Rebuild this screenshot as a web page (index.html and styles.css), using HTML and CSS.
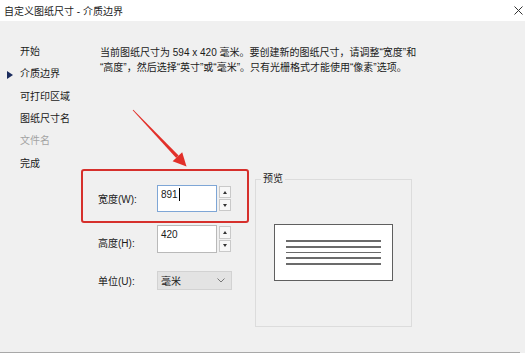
FILE: index.html
```html
<!DOCTYPE html>
<html lang="zh-CN">
<head>
    <meta charset="UTF-8">
    <title>自定义图纸尺寸 - 介质边界</title>
    <link rel="stylesheet" href="styles.css">
</head>
<body>
    <div class="dialog">
        <div class="titlebar">
            <span class="title">自定义图纸尺寸 - 介质边界</span>
            <svg class="close" width="9" height="9" viewBox="0 0 9 9">
                <path d="M0.5 0.5 L8.5 8.5 M8.5 0.5 L0.5 8.5" stroke="#333" stroke-width="1" fill="none"/>
            </svg>
        </div>

        <div class="content">
            <ul class="steps">
                <li class="step">开始</li>
                <li class="step current">介质边界</li>
                <li class="step">可打印区域</li>
                <li class="step">图纸尺寸名</li>
                <li class="step disabled">文件名</li>
                <li class="step">完成</li>
            </ul>

            <div class="main">
                <p class="intro">当前图纸尺寸为 594 x 420 毫米。要创建新的图纸尺寸，请调整“宽度”和<br>“高度”，然后选择“英寸”或“毫米”。只有光栅格式才能使用“像素”选项。</p>

                <div class="form-area">
                    <div class="fields">
                        <div class="row row-width">
                            <label class="label">宽度(W):</label>
                            <div class="spin-box">
                                <div class="spin-edit focused">891<span class="caret"></span></div>
                                <div class="spin-btns">
                                    <span class="spin-btn"><i class="tri up"></i></span>
                                    <span class="spin-btn"><i class="tri down"></i></span>
                                </div>
                            </div>
                        </div>
                        <div class="row row-height">
                            <label class="label">高度(H):</label>
                            <div class="spin-box tall">
                                <div class="spin-edit">420</div>
                                <div class="spin-btns">
                                    <span class="spin-btn"><i class="tri up"></i></span>
                                    <span class="spin-btn"><i class="tri down"></i></span>
                                </div>
                            </div>
                        </div>
                        <div class="row row-unit">
                            <label class="label">单位(U):</label>
                            <div class="select">
                                <span>毫米</span>
                                <svg width="8" height="5" viewBox="0 0 8 5">
                                    <path d="M0.5 0.5 L4 4 L7.5 0.5" stroke="#777" stroke-width="1" fill="none"/>
                                </svg>
                            </div>
                        </div>
                    </div>

                    <fieldset class="preview">
                        <legend>预览</legend>
                        <div class="preview-body">
                            <div class="sheet">
                                <span class="line"></span>
                                <span class="line"></span>
                                <span class="line"></span>
                                <span class="line"></span>
                                <span class="line"></span>
                            </div>
                        </div>
                    </fieldset>
                </div>
            </div>
        </div>

        <div class="separator"></div>

        <!-- annotation drawn over the dialog -->
        <div class="highlight"></div>
        <svg class="pointer" width="525" height="353" viewBox="0 0 525 353">
            <polygon points="132.7,110.3 133.3,109.7 178.6,155.6 176.2,158.0" fill="#e2302a"/>
            <polygon points="186.5,166.5 172.6,161.3 182.2,152.3" fill="#e2302a"/>
        </svg>
    </div>
</body>
</html>
```

FILE: styles.css
```css
* {
    box-sizing: border-box;
}

body {
    margin: 0;
    font-family: "Liberation Sans", "Noto Sans CJK SC", sans-serif;
    font-size: 10px;
    color: #1a1a1a;
    background-color: #f0f0f0;
}

.dialog {
    position: relative;
    width: 525px;
    height: 353px;
    display: flex;
    flex-direction: column;
    overflow: hidden;
}

.titlebar {
    height: 21px;
    background-color: #fff;
    display: flex;
    align-items: center;
    justify-content: space-between;
    padding: 0 2px 0 4px;
    flex-shrink: 0;
}

.title {
    color: #222;
}

.content {
    display: flex;
    flex: 1;
}

.steps {
    list-style: none;
    margin: 0;
    padding: 19.8px 0 0 0;
    width: 98px;
    flex-shrink: 0;
}

.step {
    height: 22.4px;
    line-height: 22.4px;
    padding-left: 20px;
    position: relative;
}

.step.current::before {
    content: "";
    position: absolute;
    left: 7px;
    top: 7.5px;
    border-left: 6px solid #1c2d5e;
    border-top: 4px solid transparent;
    border-bottom: 4px solid transparent;
}

.step.disabled {
    color: #a3a3a3;
}

.main {
    flex: 1;
}

.intro {
    margin: 23.5px 0 0 0;
    padding-left: 2px;
    line-height: 15px;
}

.form-area {
    display: flex;
    align-items: flex-start;
    margin-top: 98.5px;
}

.fields {
    padding-top: 12px;
    width: 157px;
    flex-shrink: 0;
}

.row {
    display: flex;
    align-items: center;
}

.row-height {
    margin-top: 13px;
}

.row-unit {
    margin-top: 18px;
}

.label {
    width: 59px;
}

.row-height .label {
    padding-top: 6px;
}

.spin-box {
    display: flex;
    width: 75px;
    height: 27px;
}

.spin-box.tall {
    height: 28px;
}

.spin-edit {
    flex: 1;
    background-color: #fff;
    border: 1px solid #b9b9b9;
    padding: 2px 0 0 3px;
    line-height: 14px;
}

.spin-edit.focused {
    border-color: #7ea6d6;
}

.caret {
    display: inline-block;
    width: 1px;
    height: 13px;
    background-color: #000;
    vertical-align: -3px;
    margin-left: 1px;
}

.spin-btns {
    width: 15px;
    display: flex;
    flex-direction: column;
    gap: 1px;
    padding: 1px 1px 1px 2px;
}

.spin-btn {
    flex: 1;
    background-color: #f7f7f7;
    border: 1px solid #c9c9c9;
    display: flex;
    align-items: center;
    justify-content: center;
}

.tri {
    border-left: 2px solid transparent;
    border-right: 2px solid transparent;
}

.tri.up {
    border-bottom: 3px solid #333;
}

.tri.down {
    border-top: 3px solid #333;
}

.select {
    width: 75px;
    height: 19px;
    background-color: #e3e3e3;
    border: 1px solid #d2d2d2;
    display: flex;
    align-items: center;
    justify-content: space-between;
    padding: 0 6px 0 3px;
}

.preview {
    margin: 0;
    padding: 0;
    width: 157px;
    border: 1px solid #dcdcdc;
}

.preview legend {
    margin-left: 5px;
    padding: 0 2px;
    line-height: 12px;
}

.preview-body {
    height: 141px;
    padding-bottom: 6px;
    display: flex;
    align-items: center;
    justify-content: center;
}

.sheet {
    width: 119px;
    height: 57px;
    background-color: #fff;
    border: 1px solid #5f5f5f;
    display: flex;
    flex-direction: column;
    align-items: center;
    justify-content: center;
    gap: 4.2px;
}

.line {
    width: 95px;
    height: 1.5px;
    background-color: #6b6b6b;
}

.separator {
    height: 1px;
    margin-right: 5px;
    background-color: #a8a8a8;
    flex-shrink: 0;
}

.highlight {
    position: absolute;
    left: 81px;
    top: 169px;
    width: 168px;
    height: 54px;
    border: 2px solid #d6302c;
    border-radius: 3px;
}

.pointer {
    position: absolute;
    left: 0;
    top: 0;
    pointer-events: none;
}
```
